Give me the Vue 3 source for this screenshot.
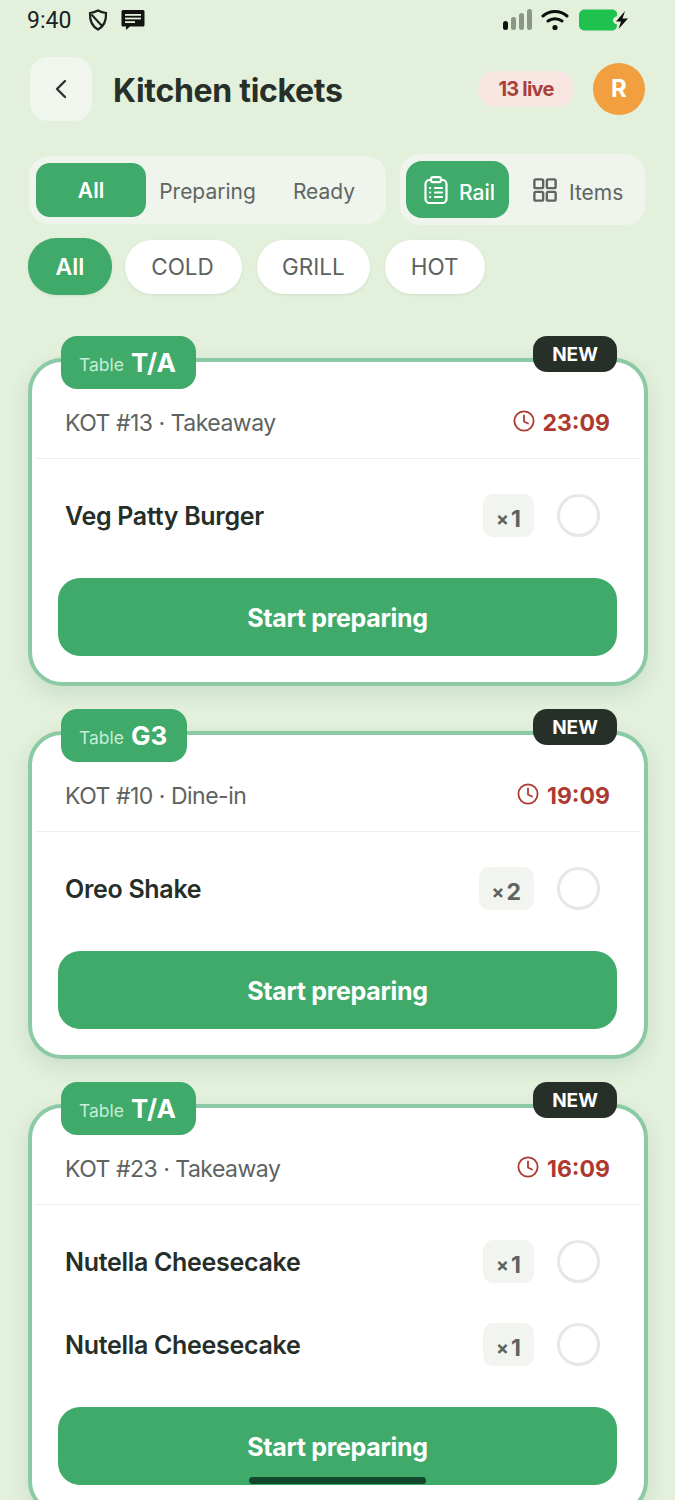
<template>
  <div class="screen">
    <!-- status bar -->
    <div class="status-bar">
      <div class="status-left">
        <span class="clock">9:40</span>
        <svg class="shield" width="20" height="22" viewBox="0 0 20 22" fill="none" stroke="#1c1f1c" stroke-width="2.2">
          <path d="M10 1.5 C13 3.2 15.5 3.8 18 4 C18.4 11 16.5 17 10 20.5 C3.5 17 1.6 11 2 4 C4.5 3.8 7 3.2 10 1.5 Z" />
          <path d="M3.5 5.5 L14 17" stroke-width="2" />
        </svg>
        <svg class="msg" width="24" height="22" viewBox="0 0 24 22">
          <path d="M2 1 H22 A1.5 1.5 0 0 1 23.5 2.5 V16 A1.5 1.5 0 0 1 22 17.5 H9 L5 21 V17.5 H2 A1.5 1.5 0 0 1 .5 16 V2.5 A1.5 1.5 0 0 1 2 1 Z" fill="#121412" />
          <rect x="4" y="5" width="16" height="1.8" fill="#e3f0dc" />
          <rect x="4" y="8.6" width="16" height="1.8" fill="#e3f0dc" />
          <rect x="4" y="12.2" width="10" height="1.8" fill="#e3f0dc" />
        </svg>
      </div>
      <div class="status-right">
        <svg width="30" height="22" viewBox="0 0 30 22">
          <rect x="1" y="12" width="5" height="9" rx="2.5" fill="#111" />
          <rect x="9" y="8" width="5" height="13" rx="2.5" fill="#8b9688" />
          <rect x="17" y="4" width="5" height="17" rx="2.5" fill="#8b9688" />
          <rect x="25" y="0" width="5" height="21" rx="2.5" fill="#8b9688" />
        </svg>
        <svg width="28" height="22" viewBox="0 0 28 22" fill="none" stroke="#0c0e0c" stroke-width="3" stroke-linecap="round">
          <path d="M2 7 C9 1 19 1 26 7" />
          <path d="M7 12 C11 9 17 9 21 12" />
          <circle cx="14" cy="18.5" r="2.6" fill="#0c0e0c" stroke="none" />
        </svg>
        <svg width="52" height="24" viewBox="0 0 52 24">
          <path d="M7 1.5 H33 C37 1.5 39 3.5 39 5.5 V8 C36 9 35 11 35 12.5 C35 14 36 15.5 39 16.5 V17 C39 20.5 37 22.5 33 22.5 H7 C3 22.5 1 20 1 17 V7 C1 4 3 1.5 7 1.5 Z" fill="#1fc24f" />
          <path d="M47 3 L38 13.5 H43 L40.5 21 L50 10.5 H44.5 Z" fill="#0c0e0c" />
        </svg>
      </div>
    </div>

    <!-- header -->
    <header class="top">
      <button class="back">
        <svg width="16" height="22" viewBox="0 0 16 22" fill="none" stroke="#2a332c" stroke-width="2.4" stroke-linecap="round" stroke-linejoin="round">
          <path d="M12 3 L4 11 L12 19" />
        </svg>
      </button>
      <h1>Kitchen tickets</h1>
      <span class="live">13 live</span>
      <span class="avatar">R</span>
    </header>

    <!-- filters -->
    <div class="tabs-row">
      <div class="segment status-seg">
        <button v-for="t in statusTabs" :key="t" class="seg-btn" :class="{ on: t === 'All' }">{{ t }}</button>
      </div>
      <div class="segment view-seg">
        <button class="view-btn on">
          <svg width="24" height="28" viewBox="0 0 24 28" fill="none" stroke="currentColor" stroke-width="2.2" stroke-linecap="round">
            <rect x="1.5" y="4" width="21" height="23" rx="4" />
            <rect x="7" y="1.2" width="10" height="5" rx="2" fill="#3faa6a" />
            <path d="M11 12 H18 M11 16.5 H18 M11 21 H18" />
            <path d="M6 12 H6.2 M6 16.5 H6.2 M6 21 H6.2" />
          </svg>
          <span>Rail</span>
        </button>
        <button class="view-btn">
          <svg width="24" height="24" viewBox="0 0 26 26" fill="none" stroke="currentColor" stroke-width="2.6">
            <rect x="1.5" y="1.5" width="9.5" height="9.5" rx="1.5" />
            <rect x="15" y="1.5" width="9.5" height="9.5" rx="1.5" />
            <rect x="1.5" y="15" width="9.5" height="9.5" rx="1.5" />
            <rect x="15" y="15" width="9.5" height="9.5" rx="1.5" />
          </svg>
          <span>Items</span>
        </button>
      </div>
    </div>

    <div class="chips">
      <button v-for="c in stations" :key="c" class="chip" :class="{ on: c === 'All' }">{{ c }}</button>
    </div>

    <!-- tickets -->
    <section v-for="t in tickets" :key="t.kot" class="ticket">
      <div class="table-tag"><span>Table</span><b>{{ t.table }}</b></div>
      <div class="new-tag">NEW</div>
      <div class="ticket-head">
        <span class="kot">KOT #{{ t.kot }} · {{ t.kind }}</span>
        <span class="time">
          <svg width="22" height="22" viewBox="0 0 22 22" fill="none" stroke="#ad3a30" stroke-width="1.8" stroke-linecap="round" stroke-linejoin="round">
            <circle cx="11" cy="11" r="9.6" />
            <path d="M11 5.5 V11.5 L15 13.5" />
          </svg>
          <b>{{ t.time }}</b>
        </span>
      </div>
      <div class="ticket-items">
        <div v-for="(item, i) in t.items" :key="i" class="item">
          <span class="item-name">{{ item.name }}</span>
          <span class="qty"><small>×</small>{{ item.qty }}</span>
          <span class="tick"></span>
        </div>
      </div>
      <button class="start">Start preparing</button>
    </section>

    <div class="home-bar"></div>
  </div>
</template>

<script setup>
const statusTabs = ['All', 'Preparing', 'Ready']
const stations = ['All', 'COLD', 'GRILL', 'HOT']

const tickets = [
  { table: 'T/A', kot: 13, kind: 'Takeaway', time: '23:09', items: [{ name: 'Veg Patty Burger', qty: 1 }] },
  { table: 'G3', kot: 10, kind: 'Dine-in', time: '19:09', items: [{ name: 'Oreo Shake', qty: 2 }] },
  {
    table: 'T/A',
    kot: 23,
    kind: 'Takeaway',
    time: '16:09',
    items: [
      { name: 'Nutella Cheesecake', qty: 1 },
      { name: 'Nutella Cheesecake', qty: 1 }
    ]
  }
]
</script>

<style>
body {
  background: #e3f0dc;
}
</style>

<style scoped>
.screen {
  position: relative;
  height: 1500px;
  overflow: hidden;
  padding: 0 27px 0 28px;
  box-sizing: border-box;
  background: #e3f0dc;
  font-family: Inter, "Noto Sans", sans-serif;
  color: #262e28;
}

button {
  font-family: inherit;
  border: none;
  padding: 0;
}

.status-bar {
  height: 40px;
  display: flex;
  align-items: center;
  justify-content: space-between;
}

.status-left,
.status-right {
  display: flex;
  align-items: center;
}

.clock {
  margin-left: -1px;
  font-family: Roboto, sans-serif;
  font-size: 23px;
  color: #1c1f1c;
}

.shield {
  margin-left: 17px;
}

.msg {
  margin-left: 13px;
}

.status-right {
  gap: 9px;
  margin-right: 18px;
}

.top {
  display: flex;
  align-items: center;
  height: 64px;
  margin-top: 17px;
  padding-right: 3px;
}

.back {
  width: 62px;
  height: 64px;
  margin-left: 2px;
  border-radius: 18px;
  background: #f0f5ee;
  display: flex;
  align-items: center;
  justify-content: center;
}

h1 {
  margin: 2px 0 0 21px;
  font-size: 32px;
  font-weight: 700;
  letter-spacing: -0.3px;
  color: #263029;
  flex: 1;
}

.live {
  width: 96px;
  height: 36px;
  line-height: 36px;
  border-radius: 18px;
  background: #f9e6e2;
  color: #a8403c;
  text-align: center;
  font-size: 20px;
  font-weight: 700;
  letter-spacing: -0.8px;
}

.avatar {
  width: 52px;
  height: 52px;
  margin-left: 19px;
  border-radius: 50%;
  background: #f2a03f;
  color: #fff;
  text-align: center;
  line-height: 52px;
  font-size: 24px;
  font-weight: 700;
}

.tabs-row {
  display: flex;
  align-items: center;
  gap: 14px;
  margin-top: 33px;
  padding-left: 1px;
}

.segment {
  background: #eff4ed;
  border-radius: 20px;
  box-sizing: border-box;
}

.status-seg {
  display: grid;
  grid-template-columns: 110px 123px 110px;
  width: 357px;
  height: 68px;
  padding: 7px;
}

.seg-btn {
  background: none;
  font-size: 21px;
  color: #5f6661;
  padding-top: 3px;
}

.seg-btn.on {
  border-radius: 14px;
  background: #3faa6a;
  color: #fff;
  font-weight: 600;
  padding-top: 1px;
}

.view-seg {
  display: flex;
  width: 245px;
  height: 71px;
  padding: 7px 6px;
}

.view-btn {
  display: flex;
  align-items: center;
  gap: 12px;
  background: none;
  padding-left: 24px;
  font-size: 21px;
  color: #5f6661;
}

.view-btn span {
  margin-top: 6px;
}

.view-btn.on {
  width: 103px;
  padding-left: 18px;
  gap: 11px;
  border-radius: 16px;
  background: #3faa6a;
  color: #fff;
  font-weight: 500;
}

.chips {
  display: flex;
  align-items: center;
  gap: 15px;
  margin-top: 13px;
}

.chip {
  height: 54px;
  padding: 0 26px;
  border-radius: 28px;
  background: #fff;
  font-size: 22.5px;
  color: #5c625e;
  box-shadow: 0 1px 3px rgba(70, 110, 80, 0.12);
}

.chip:nth-child(2) {
  padding: 0 27.5px 0 26px;
  width: 117px;
}

.chip:nth-child(3) {
  width: 113px;
  padding: 0;
}

.chip.on {
  height: 57px;
  margin-right: -2px;
  padding: 0 27.5px;
  background: #3faa6a;
  color: #fff;
  font-size: 23px;
  font-weight: 600;
}

.ticket {
  position: relative;
  margin-top: 63px;
  width: 620px;
  box-sizing: border-box;
  background: #fff;
  border: 4px solid #8ccaa6;
  border-radius: 34px;
  padding: 0 3px;
  box-shadow: 0 8px 20px rgba(60, 120, 80, 0.14);
}

.ticket + .ticket {
  margin-top: 45px;
}

.table-tag {
  position: absolute;
  top: -26px;
  left: 29px;
  height: 53px;
  padding: 0 20px 0 18px;
  display: flex;
  align-items: center;
  gap: 7px;
  border-radius: 16px;
  background: #3faa6a;
  color: #fff;
}

.table-tag span {
  font-size: 17.5px;
  color: #c9ecd6;
  margin-top: 4px;
}

.table-tag b {
  font-size: 26px;
  font-weight: 700;
}

.new-tag {
  position: absolute;
  top: -26px;
  right: 27px;
  width: 84px;
  height: 36px;
  line-height: 37px;
  border-radius: 14px;
  background: #263029;
  color: #fff;
  text-align: center;
  font-size: 19px;
  font-weight: 700;
}

.ticket-head {
  height: 97px;
  box-sizing: border-box;
  padding: 26px 31px 0 30px;
  display: flex;
  align-items: center;
  justify-content: space-between;
  border-bottom: 1px solid #eef0ee;
}

.kot {
  font-size: 23px;
  color: #5d6360;
  letter-spacing: -0.5px;
}

.time {
  display: flex;
  align-items: center;
  gap: 8px;
}

.time svg {
  margin-top: -4px;
}

.time b {
  font-size: 23px;
  font-weight: 700;
  color: #ad3a30;
}

.ticket-items {
  display: flex;
  flex-direction: column;
  gap: 40px;
  padding: 35px 41px 0 30px;
}

.item {
  display: flex;
  align-items: center;
  height: 43px;
}

.item-name {
  flex: 1;
  font-size: 25px;
  font-weight: 600;
  letter-spacing: -0.3px;
  color: #262e28;
}

.qty {
  height: 43px;
  min-width: 51px;
  padding: 7px 13px 0;
  box-sizing: border-box;
  border-radius: 10px;
  background: #f1f4ef;
  display: flex;
  align-items: center;
  justify-content: center;
  font-size: 23px;
  font-weight: 700;
  color: #5d6360;
}

.qty small {
  font-size: 19px;
  margin-right: 2px;
}

.tick {
  width: 43px;
  height: 43px;
  margin-left: 23px;
  box-sizing: border-box;
  border: 3px solid #e5e8e4;
  border-radius: 50%;
}

.start {
  display: block;
  width: 559px;
  height: 78px;
  margin: 41px 0 26px 23px;
  padding-top: 2px;
  border-radius: 22px;
  background: #3faa6a;
  color: #fff;
  font-size: 25px;
  font-weight: 700;
  letter-spacing: -0.3px;
}

.home-bar {
  position: absolute;
  left: 249px;
  top: 1477px;
  width: 177px;
  height: 7px;
  border-radius: 4px;
  background: #11472b;
}
</style>
